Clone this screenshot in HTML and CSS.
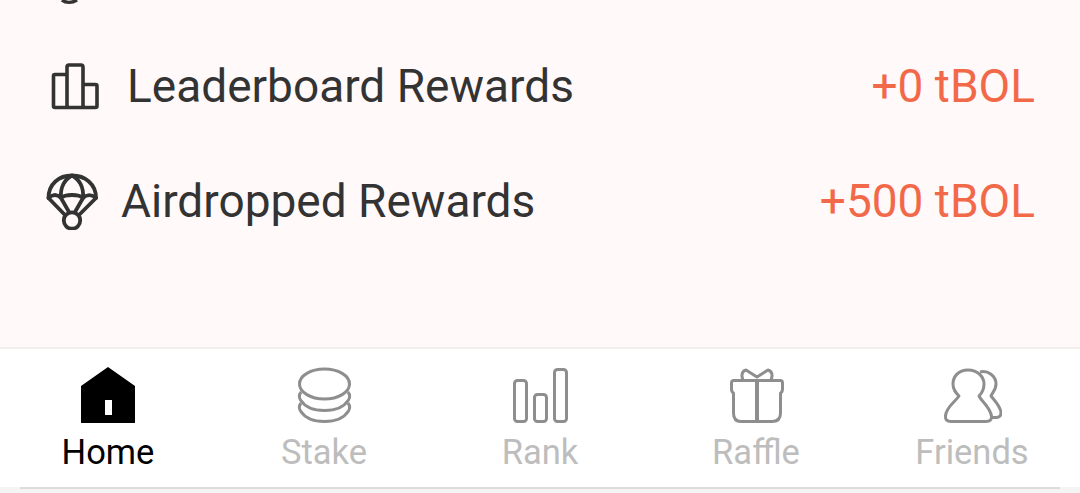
FILE: index.html
```html
<!doctype html>
<html lang="en">

<head>
    <meta charset="utf-8">
    <meta name="viewport" content="width=device-width, initial-scale=1.0">
    <title>Rewards</title>
    <link rel="stylesheet" href="styles.css">
</head>

<body>
    <div id="rewards">
        <svg class="cut-icon" width="24" height="4" viewBox="0 0 24 4">
            <path d="M3 0 C7 3 13 3 18 0" fill="none" stroke="#333" stroke-width="3.5" />
        </svg>

        <div class="reward-row row-leader">
            <svg class="row-icon" width="50" height="50" viewBox="0 0 50 50">
                <path d="M17 46.5 H5 Q3.500 46.500 3.500 45 V15 Q3.500 13.500 5 13.500 H17 M17 46.500 V6 Q17 4 19 4 H31 Q33 4 33 6 V46.500 M33 23.500 H45.500 Q47 23.500 47 25 V45 Q47 46.500 45.500 46.500 H17" fill="none" stroke="#333" stroke-width="3.6" stroke-linejoin="round" />
            </svg>
            <span class="reward-name">Leaderboard Rewards</span>
            <span class="reward-value">+0 tBOL</span>
        </div>

        <div class="reward-row row-airdrop">
            <svg class="row-icon" width="54" height="58" viewBox="0 0 54 58">
                <g fill="none" stroke="#333" stroke-width="3.8" stroke-linejoin="round" stroke-linecap="round">
                    <path d="M3.500 26 C3.500 12 14 3.500 27 3.500 C40 3.500 51 12 51 26 L34 43 M3.500 26 L20 43" />
                    <path d="M3.500 26 C8 22 12 22 16 26 C20 22 34 22 38 26 C42 22 46 22 51 26" />
                    <path d="M16 26 C15 15 20 7 27 3.500 C34 7 39 15 38 26 L30 40 M16 26 L24 40" />
                    <circle cx="27" cy="48.500" r="8.200" />
                </g>
            </svg>
            <span class="reward-name">Airdropped Rewards</span>
            <span class="reward-value">+500 tBOL</span>
        </div>
    </div>

    <div id="tabbar">
        <div class="tab active">
            <svg width="56" height="58" viewBox="0 0 56 58">
                <path fill-rule="evenodd" d="M1 19 L28 0 L55 19 V56 H1 Z M25 33 V48 H32 V33 Z" fill="#000" />
            </svg>
            <span>Home</span>
        </div>
        <div class="tab">
            <svg width="56" height="58" viewBox="0 0 56 58">
                <g fill="none" stroke="#8e8e8e" stroke-width="3">
                    <ellipse cx="28.500" cy="17" rx="25" ry="15" />
                    <path d="M5 25 Q2 29 4.500 33 C9 40 18 43.500 28.500 43.500 C39 43.500 48 40 52.500 33 Q55 29 52 25" />
                    <path d="M5 36 Q2 40 4.500 44 C9 51 18 54.500 28.500 54.500 C39 54.500 48 51 52.500 44 Q55 40 52 36" />
                </g>
            </svg>
            <span>Stake</span>
        </div>
        <div class="tab">
            <svg width="56" height="58" viewBox="0 0 56 58">
                <g fill="none" stroke="#8e8e8e" stroke-width="3">
                    <rect x="2.500" y="13.500" width="12" height="41" rx="3" />
                    <rect x="22.500" y="27.500" width="12" height="27" rx="3" />
                    <rect x="42.500" y="2.500" width="12" height="52" rx="3" />
                </g>
            </svg>
            <span>Rank</span>
        </div>
        <div class="tab">
            <svg width="56" height="58" viewBox="0 0 56 58">
                <g fill="none" stroke="#8e8e8e" stroke-width="3" stroke-linejoin="round">
                    <path d="M5 13.500 H52 Q54.500 13.500 54.500 16 V22 Q54.500 25 52.500 26 V46 Q52.500 54.500 44 54.500 H13 Q5.500 54.500 5.500 46 V26 Q3.500 25 3.500 22 V16 Q3.500 13.500 6 13.500 Z" />
                    <path d="M29 13.500 V54.500" stroke-width="4" />
                    <path d="M15 13 C13 8 14 4 18 3 L29 10 L40 3 C44 4 45 8 43 13" />
                </g>
            </svg>
            <span>Raffle</span>
        </div>
        <div class="tab">
            <svg width="60" height="58" viewBox="0 0 60 58">
                <g fill="none" stroke="#8e8e8e" stroke-width="3" stroke-linejoin="round">
                    <path d="M26 3 C16 3 11 10 11 17 C11 23 14 26 17 29 C13 35 4 40 3.500 49 Q3 54.500 9 54.500 H44 Q50 54.500 49.500 49 C48 40 40 35 37 29 C40 26 42 23 42 17 C42 10 36 3 26 3 Z" />
                    <path d="M38 5 C46 3 54 9 54 17 C54 23 50 26 49 29 C53 34 59 40 59 46 Q59 50.500 54 50.500 H49" />
                </g>
            </svg>
            <span>Friends</span>
        </div>
    </div>

    <div id="bottom-strip"></div>
</body>

</html>
```

FILE: styles.css
```css
html,
body {
    margin: 0;
    padding: 0;
}

body {
    width: 1080px;
    height: 493px;
    overflow: hidden;
    display: flex;
    flex-direction: column;
    background-color: #f4f4f4;
    color: #333;
    font-family: 'Roboto', sans-serif;
}

#rewards {
    height: 347px;
    flex: none;
    box-sizing: border-box;
    background-color: #fff9f9;
    padding-right: 45px;
    position: relative;
}

.cut-icon {
    position: absolute;
    top: 0;
    left: 59px;
}

.reward-row {
    display: flex;
    align-items: center;
    font-size: 46px;
}

.row-leader {
    padding-top: 60px;
    padding-left: 50px;
    height: 52px;
}

.row-leader .row-icon {
    margin-right: 27px;
}

.row-airdrop {
    padding-top: 63px;
    padding-left: 45px;
    height: 52px;
}

.row-airdrop .row-icon {
    margin-right: 22px;
}

.reward-value {
    margin-left: auto;
    color: #f2694a;
}

/* barre du bas */
#tabbar {
    height: 140px;
    flex: none;
    box-sizing: border-box;
    border-top: 2px solid #f1eeee;
    background-color: #fff;
    display: grid;
    grid-template-columns: repeat(5, 1fr);
}

.tab {
    display: flex;
    flex-direction: column;
    align-items: center;
    padding-top: 18px;
    font-size: 34.5px;
    line-height: 40px;
    color: #bdbdbd;
}

.tab.active {
    color: #000;
}

.tab svg {
    margin-bottom: 7px;
}

#bottom-strip {
    flex: 1;
    margin: 0 20px;
    border-top: 2px solid #dcdcdc;
}
```
